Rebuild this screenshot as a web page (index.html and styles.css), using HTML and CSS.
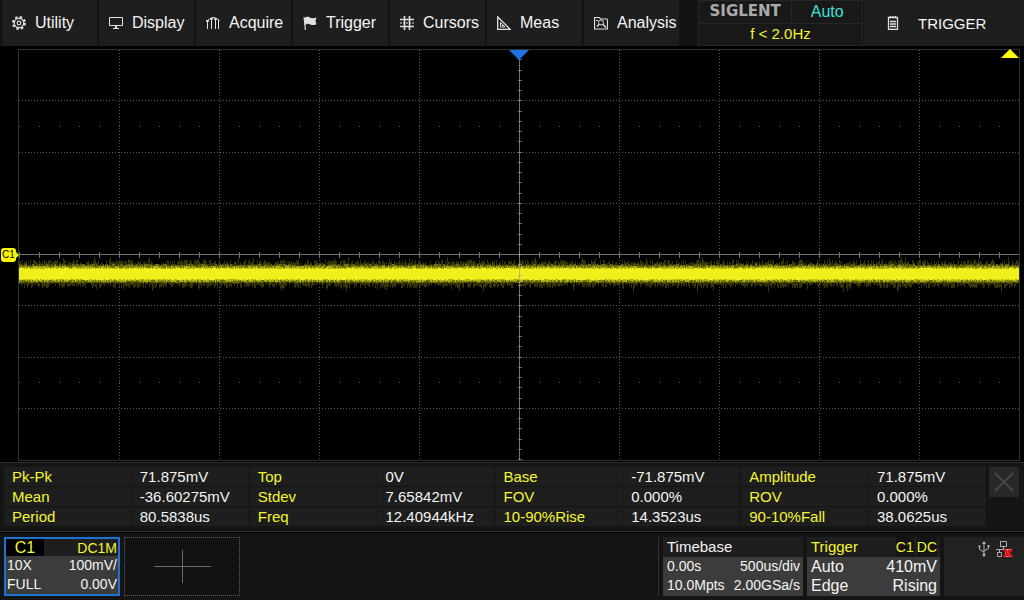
FILE: index.html
```html
<!DOCTYPE html>
<html lang="en">
<head>
    <meta charset="UTF-8">
    <meta name="viewport" content="width=device-width, initial-scale=1.0">
    <title>Oscilloscope</title>
    <link rel="stylesheet" href="styles.css">
</head>
<body>
    <header class="top-bar">
        <nav class="menu">
            <button class="menu-item">
                <svg class="icon" viewBox="0 0 14 14"><circle cx="7" cy="7" r="4.700" stroke-width="1.200"/><circle cx="7" cy="7" r="1.800" stroke-width="1.200"/><circle cx="7" cy="7" r="6" stroke-width="2" stroke-dasharray="2.500 2.210"/></svg>
                Utility
            </button>
            <button class="menu-item">
                <svg class="icon" viewBox="0 0 14 14"><path d="M.5 1.500h13v8H.5zM7 10v2M4 12.500h6"/><path class="solid" d="M6 10h2v2h2v1H4v-1h2z"/></svg>
                Display
            </button>
            <button class="menu-item">
                <svg class="icon" viewBox="0 0 14 14"><path d="M1.500 13V5M5.500 13V3M9.500 13V3M12.500 13V4M0 5C3 4.500 4 1.500 7 1.500S11 3 13.500 4.500"/><path d="M.5 4.500h2v1h-2zM4.500 2.500h2v1h-2zM8.500 2.500h2v1h-2z"/></svg>
                Acquire
            </button>
            <button class="menu-item">
                <svg class="icon" viewBox="0 0 14 14"><path class="solid" d="M.5 1h1l.3 1C4-.2 6 1 7.500 1.800c1.500.8 3.500.6 6-.3l-1 3.300.8 3.500c-2.500 1.200-4.500.9-6 .2C5.500 7.500 4 7.500 2.500 9L3 14H1.800z"/></svg>
                Trigger
            </button>
            <button class="menu-item">
                <svg class="icon" viewBox="0 0 14 14"><path d="M4.500 0v14M9.500 0v14M0 3.500h14M0 10.500h14" stroke-width="1.600"/><path d="M0 7h14" stroke-dasharray="2 1"/></svg>
                Cursors
            </button>
            <button class="menu-item">
                <svg class="icon" viewBox="0 0 14 14"><path d="M.7.800v12.700h12.600z" stroke-width="1.300"/><path d="M3.500 6.500v4.500h4.500zM5 9.500h1"/></svg>
                Meas
            </button>
            <button class="menu-item">
                <svg class="icon" viewBox="0 0 14 14"><path d="M13.500 3.500v9.500H.5V1.500h5l1 1.500h7M2 4.500h2" stroke-width="1.200"/><circle cx="7" cy="6.500" r="2.500"/><path d="M9 8.500l3 3M5 8.500l-2 2" stroke-width="1.500"/></svg>
                Analysis
            </button>
        </nav>
        <div class="status">
            <div class="logo">SIGLENT</div>
            <div class="run-state">Auto</div>
            <div class="freq">f &lt; 2.0Hz</div>
        </div>
        <button class="page-button">
            <svg class="icon" viewBox="0 0 14 14"><path d="M2.500 1.500h9v12h-9zM4 5.500h6M4 8h6M4 10.500h6M4.500 0v2M7 0v2M9.500 0v2" stroke-width="1.300"/></svg>
            TRIGGER
        </button>
    </header>

    <main class="plot">
        <canvas class="graph" id="graph"></canvas>
        <svg class="marker-delay" viewBox="0 0 20 10"><path d="M0 0h20L10 10z"/></svg>
        <svg class="marker-level" viewBox="0 0 18 9"><path d="M0 9h18L9 0z"/></svg>
        <div class="marker-channel">C1</div>
    </main>

    <section class="measurements">
        <table class="measure-table">
            <tr>
                <th scope="row">Pk-Pk</th><td>71.875mV</td>
                <th scope="row">Top</th><td>0V</td>
                <th scope="row">Base</th><td>-71.875mV</td>
                <th scope="row">Amplitude</th><td>71.875mV</td>
            </tr>
            <tr>
                <th scope="row">Mean</th><td>-36.60275mV</td>
                <th scope="row">Stdev</th><td>7.65842mV</td>
                <th scope="row">FOV</th><td>0.000%</td>
                <th scope="row">ROV</th><td>0.000%</td>
            </tr>
            <tr>
                <th scope="row">Period</th><td>80.5838us</td>
                <th scope="row">Freq</th><td>12.40944kHz</td>
                <th scope="row">10-90%Rise</th><td>14.3523us</td>
                <th scope="row">90-10%Fall</th><td>38.0625us</td>
            </tr>
        </table>
        <button class="close-button" aria-label="Close">
            <svg viewBox="0 0 20 20"><path d="M1 1l18 18M19 1L1 19"/></svg>
        </button>
    </section>

    <footer class="bottom-bar">
        <button class="card channel">
            <span class="card-head"><span class="channel-name">C1</span><span class="coupling">DC1M</span></span>
            <span class="card-row"><span>10X</span><span>100mV/</span></span>
            <span class="card-row"><span>FULL</span><span>0.00V</span></span>
        </button>
        <button class="add-channel" aria-label="Add channel">
            <svg viewBox="0 0 57 33"><path d="M0 16.500h57M28.500 0v33"/></svg>
        </button>
        <div class="right-group">
            <button class="card timebase">
                <span class="card-head">Timebase</span>
                <span class="card-row"><span>0.00s</span><span>500us/div</span></span>
                <span class="card-row"><span>10.0Mpts</span><span>2.00GSa/s</span></span>
            </button>
            <button class="card trigger">
                <span class="card-head"><span>Trigger</span><span class="source"><span>C1</span><span>DC</span></span></span>
                <span class="card-row"><span>Auto</span><span>410mV</span></span>
                <span class="card-row"><span>Edge</span><span>Rising</span></span>
            </button>
            <div class="ports">
                <svg class="usb" viewBox="0 0 12 16"><path d="M6 2v11M1.500 6v2.500L6 11M10.500 5v2.500L6 10"/><path class="solid" d="M6 0l2 3H4zM.5 4.500h2v2h-2zM9.500 4h2v2h-2z"/><circle class="solid" cx="6" cy="14" r="1.500"/></svg>
                <svg class="lan" viewBox="0 0 17 17"><path d="M4.500.5h6v5h-6zM7.500 6v2M0 8.500h14M3.500 9v2M1.500 11.500h4v4h-4zM11.500 9v2M9.500 11.500h4v4h-4z"/><path class="cross" d="M8 8l8 8M16 8l-8 8"/></svg>
            </div>
        </div>
    </footer>

    <script src="script.js"></script>
</body>
</html>
```
FILE: styles.css
```css
* {
    box-sizing: border-box;
}

body {
    font-family: "Liberation Sans", Arial, sans-serif;
    font-size: 15px;
    background: #000;
    color: #f4f4f4;
    display: flex;
    flex-direction: column;
    height: 100vh;
    margin: 0;
}

button {
    font: inherit;
    color: inherit;
    border: none;
    padding: 0;
    cursor: pointer;
}

svg {
    fill: none;
    stroke: currentColor;
}

.solid {
    fill: currentColor;
    stroke: none;
}

/* Top bar */
.top-bar {
    display: grid;
    grid-template-columns: minmax(0, 679fr) minmax(0, 183fr) minmax(0, 160fr);
    column-gap: 1px;
    height: 47px;
    background: #131313;
    border-bottom: 1px solid #000;
}

.menu {
    display: grid;
    grid-template-columns: repeat(7, minmax(0, 1fr));
    gap: 2px;
    padding-left: 2px;
}

.menu-item {
    display: flex;
    align-items: center;
    gap: 9px;
    padding-left: 10px;
    background: #1e1e1e;
    font-size: 16px;
}

.icon {
    flex: none;
    width: 14px;
    height: 14px;
    color: #e0e0e0;
}

.status {
    display: grid;
    grid-template-columns: 94fr 70fr;
    grid-template-rows: 22px 22px;
    margin-left: 18px;
    background: #181818;
    border: 1px solid #262626;
    text-align: center;
    line-height: 22px;
}

.logo {
    font-family: "DejaVu Sans", sans-serif;
    font-weight: bold;
    font-size: 15px;
    color: #aaa;
    line-height: 20px;
    border-right: 1px solid #262626;
}

.run-state {
    font-size: 16px;
    color: #3ce0dc;
}

.freq {
    grid-column: 1 / 3;
    line-height: 20px;
    color: #f6f632;
    border-top: 1px solid #262626;
}

.page-button {
    display: flex;
    align-items: center;
    gap: 18px;
    padding-left: 22px;
    background: #1e1e1e;
}

/* Waveform area */
.plot {
    position: relative;
    flex: 1;
    min-height: 0;
    padding: 2px 4px 1px 18px;
}

.graph {
    display: block;
    width: 100%;
    height: 100%;
    border: 1px solid #303030;
}

.marker-delay {
    position: absolute;
    top: 3px;
    left: calc(50% - 3px);
    width: 20px;
    height: 10px;
    fill: #1c74e0;
    stroke: none;
}

.marker-level {
    position: absolute;
    top: 2px;
    right: 5px;
    width: 18px;
    height: 9px;
    fill: #ff0;
    stroke: none;
}

.marker-channel {
    position: absolute;
    top: 50%;
    left: 1px;
    width: 15px;
    height: 14px;
    margin-top: -7px;
    border-radius: 3px;
    background: #f8f800;
    color: #000;
    font-size: 10px;
    line-height: 14px;
    text-align: center;
}

.marker-channel::after {
    content: "";
    position: absolute;
    top: 4px;
    left: 15px;
    border: 3px solid transparent;
    border-left-color: #f8f800;
    border-right: none;
}

/* Measurements */
.measurements {
    display: flex;
    align-items: flex-start;
    gap: 2px;
    height: 70px;
    padding: 4px 5px 4px 4px;
    background: #151515;
    border-top: 1px solid #2c2c2c;
    border-bottom: 1px solid #303030;
}

.measure-table {
    flex: 1;
    table-layout: fixed;
    border-collapse: separate;
    border-spacing: 0;
    background: #1e1e1e;
}

.measure-table th,
.measure-table td {
    height: 20px;
    padding: 0 8px;
    line-height: 19px;
    text-align: left;
    white-space: nowrap;
    border-bottom: 1px solid #141414;
    border-right: 1px solid #191919;
}

.measure-table th {
    width: 13%;
    font-weight: normal;
    color: #f6f632;
}

.measure-table td {
    width: 12%;
    border-right-color: #101010;
}

.close-button {
    width: 30px;
    height: 30px;
    padding: 5px;
    background: #282828;
    color: #484848;
}

.close-button svg {
    display: block;
    stroke-width: 2;
}

/* Bottom bar */
.bottom-bar {
    display: flex;
    gap: 4px;
    height: 68px;
    padding: 4px 0 4px 4px;
    background: #141414;
    border-top: 1px solid #000;
}

.card {
    display: flex;
    flex-direction: column;
    background: #3c3c3c;
    line-height: 19px;
    text-align: left;
}

.card-head,
.card-row {
    display: flex;
    justify-content: space-between;
    padding: 0 3px 0 4px;
}

.card-head {
    height: 20px;
    background: #1e1e1e;
    line-height: 20px;
}

.channel {
    width: 116px;
    border: 2px solid #1c74d0;
    font-size: 14px;
}

.channel .card-head {
    height: 17px;
    padding: 0 1px 0 0;
    line-height: 18px;
    color: #f6f632;
}

.channel .card-row {
    padding: 0 1px;
}

.channel-name {
    width: 38px;
    background: #000;
    font-size: 16px;
    text-align: center;
}

.add-channel {
    display: flex;
    justify-content: center;
    align-items: center;
    width: 116px;
    background: #121212;
    border: 1px dotted #606060;
    color: #6a6a6a;
}

.add-channel svg {
    width: 57px;
    height: 33px;
}

.right-group {
    display: flex;
    gap: 4px;
    margin-left: auto;
    padding-left: 4px;
    border-left: 1px solid #303030;
}

.timebase {
    width: 140px;
    font-size: 14px;
}

.timebase .card-head {
    font-size: 15px;
}

.trigger {
    width: 133px;
    font-size: 16px;
}

.trigger .card-head {
    font-size: 15px;
    color: #f6f632;
}

.source {
    display: flex;
    gap: 3px;
    font-size: 14px;
}

.source span {
    background: #141414;
}

.ports {
    display: flex;
    justify-content: flex-end;
    align-items: flex-start;
    gap: 6px;
    width: 80px;
    padding: 4px 11px 0 0;
    background: #212121;
    color: #b0b0b0;
}

.usb {
    width: 12px;
    height: 16px;
}

.lan {
    width: 17px;
    height: 17px;
}

.cross {
    stroke: #f01414;
    stroke-width: 2.500;
}
```
FILE: script.js
```js
const canvas = document.getElementById('graph');
const ctx = canvas.getContext('2d');

const COLS = 10;
const ROWS = 8;

// small seeded generator so the noise is the same after every resize
let seed = 7;
const random = () => {
    seed = (seed * 16807) % 2147483647;
    return seed / 2147483647;
};

const drawTrace = (width, height) => {
    const mid = Math.round(height * 0.546);
    const bar = (x, up, down, color) => {
        ctx.fillStyle = color;
        ctx.fillRect(x, mid - up, 1, up + down);
    };
    seed = 7;
    for (let x = 0; x < width; x++) {
        const spikeUp = random() < 0.06 ? 3 : 0;
        const spikeDown = random() < 0.06 ? 4 : 0;
        bar(x, 9 + Math.floor(random() * 6) + spikeUp, 9 + Math.floor(random() * 6) + spikeDown, '#343404');
        bar(x, 8 + Math.floor(random() * 3), 8 + Math.floor(random() * 2), '#6c6c08');
        bar(x, 6 + Math.floor(random() * 3), 6 + Math.floor(random() * 3), '#b0b010');
        bar(x, 5 + Math.floor(random() * 2), 5 + Math.floor(random() * 2), '#f0f01c');
    }
};

const drawGrid = (width, height) => {
    const colX = (i) => Math.round(i * width / COLS);
    const rowY = (i) => Math.round(i * height / ROWS) - 1;

    ctx.fillStyle = '#585858';
    for (let i = 1; i < COLS; i++) {
        for (let y = 0; y < height; y += 3) {
            ctx.fillRect(colX(i), y, 1, 1);
        }
    }
    for (let i = 1; i < ROWS; i++) {
        for (let x = 0; x < width; x += 3) {
            ctx.fillRect(x, rowY(i), 1, 1);
        }
    }
    // sparse reference dots
    for (let i = 0; i < COLS * 5; i++) {
        ctx.fillRect(colX(i / 5), rowY(1.5), 1, 1);
        ctx.fillRect(colX(i / 5), rowY(6.5), 1, 1);
    }

    // horizontal axis with ticks
    ctx.fillStyle = '#707070';
    ctx.fillRect(0, rowY(4), width, 1);
    for (let i = 0; i < COLS * 5; i++) {
        ctx.fillRect(colX(i / 5), rowY(4) - 2, 1, 6);
    }
};

const drawCenterAxis = (width, height) => {
    const x = Math.round(width / 2);
    ctx.fillStyle = 'rgba(160, 160, 160, 0.65)';
    ctx.fillRect(x, 0, 1, height);
    for (let i = 1; i <= ROWS * 5; i++) {
        ctx.fillRect(x - 1, Math.round(i * height / (ROWS * 5)) - 1, 4, 1);
    }
};

const draw = () => {
    const width = canvas.clientWidth;
    const height = canvas.clientHeight;
    canvas.width = width;
    canvas.height = height;
    drawGrid(width, height);
    drawTrace(width, height);
    drawCenterAxis(width, height);
};

window.addEventListener('resize', draw);
draw();
```
